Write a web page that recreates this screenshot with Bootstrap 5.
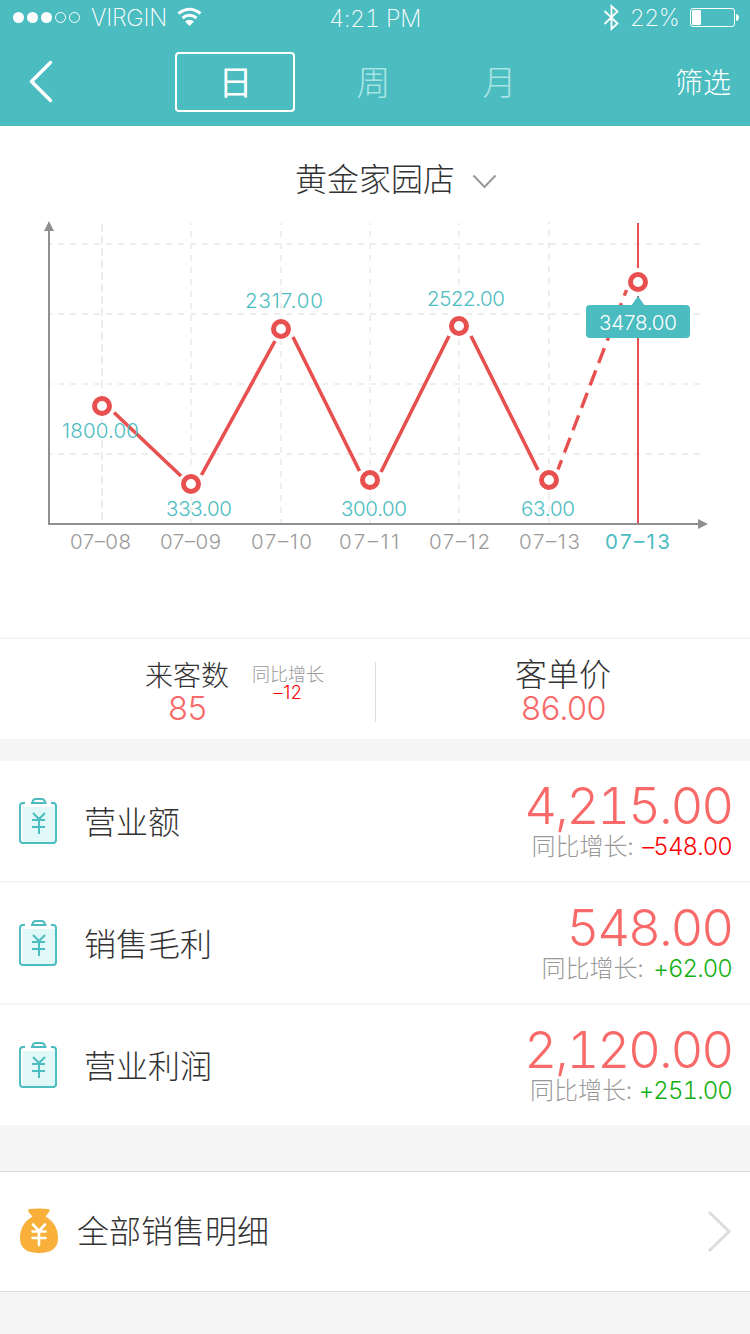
<!DOCTYPE html>
<html lang="zh-CN">
<head>
<meta charset="utf-8">
<meta name="viewport" content="width=device-width, initial-scale=1">
<title>黄金家园店</title>
<link href="https://cdn.jsdelivr.net/npm/bootstrap@5.3.0/dist/css/bootstrap.min.css" rel="stylesheet">
<style>
:root { --teal:#4bbcbf; --coral:#f86a69; --line:#f5f5f5; }
body { background:#f5f5f5; color:#333; font-family:Inter,"Noto Sans CJK SC",sans-serif; font-weight:300; width:750px; height:1334px; overflow:hidden; }
svg { display:block; flex:none; }
.cjk { font-family:"Noto Sans CJK SC",sans-serif; }
.num { font-variant-numeric:tabular-nums; white-space:nowrap; }
.app-head { background:var(--teal); height:126px; }
.status { height:36px; font-size:23.5px; line-height:38px; font-weight:200; letter-spacing:-.25px; }
.status-side { width:300px; }
.toolbar { height:90px; padding:0 19px 0 27px; }
.seg { width:120px; height:60px; font-size:34px; line-height:53px; border:2px solid transparent; border-radius:4px; text-align:center; color:#a9e4e4; padding:0 0 0 1px; text-decoration:none; }
.seg.active { border-color:#fff; color:#fff; font-weight:400; }
.filter { font-size:28px; line-height:38px; width:56px; }
.trend { height:513px; border-bottom:2px solid var(--line); }
.store { height:84px; padding:30px 0 0 44px; font-size:32px; line-height:42px; }
.stats { height:100px; }
.stat-title { line-height:34px; height:32px; margin-top:-1px; }
.coral { color:var(--coral); }
.gray { color:#999; }
.stat-num { font-size:32.5px; line-height:39px; letter-spacing:-1.6px; }
.rule { width:1px; height:60px; background:#ddd; margin-top:23px; }
.metric { height:122px; border-bottom:2px solid var(--line); padding:0 18px; }
.metric:last-child { height:120px; border:0; }
.metric-name { font-size:32px; line-height:42px; margin:-3px 0 0 26px; }
.big { font-size:51px; line-height:54px; letter-spacing:-2.2px; }
.cmp { font-size:24px; line-height:28px; margin-top:-2px; margin-bottom:2px; }
.cmp .num { letter-spacing:-.9px; }
.down { color:#f00; } .up { color:#13b013; }
.detail { height:121px; border-top:1px solid #ddd; border-bottom:1px solid #ddd; margin-top:46px; padding:0 19px 2px; }
.detail-name { font-size:32px; line-height:42px; margin:-3px 0 0 19px; }
</style>
</head>
<body>
<header class="app-head text-white">
  <div class="status d-flex justify-content-between">
    <div class="status-side d-flex align-items-center">
      <svg width="91" height="36" fill="#fff"><circle cx="18.500" cy="17.500" r="5.500"/><circle cx="32.500" cy="17.500" r="5.500"/><circle cx="46.500" cy="17.500" r="5.500"/><g fill="none" stroke="#fff"><circle cx="60.500" cy="17.500" r="5"/><circle cx="74.500" cy="17.500" r="5"/></g></svg>
      <span class="num">VIRGIN</span>
      <svg style="margin-left:9px" width="30" height="36" viewBox="176 0 30 36"><g fill="none" stroke="#fff" stroke-width="3"><path d="M178.500 13.500Q189.500 5 200.500 13.500"/><path d="M182.500 18Q189.500 12.500 196.500 18"/></g><path d="M185 21.500Q189.500 18 194 21.500L189.500 26Z" fill="#fff"/></svg>
    </div>
    <span class="num">4:21 PM</span>
    <div class="status-side d-flex align-items-center justify-content-end">
      <svg width="20" height="36" viewBox="602 0 20 36"><path d="M604.500 11L617.500 23.500L611.500 29V6L617.500 11.500L604.500 24" fill="none" stroke="#fff" stroke-width="1.800"/></svg>
      <span class="num mx-2" style="letter-spacing:-.7px">22%</span>
      <svg style="margin-left:3px" width="60" height="36" viewBox="690 0 60 36"><rect x="690.500" y="8.500" width="44" height="18" rx="2.500" fill="none" stroke="#fff"/><rect x="692" y="10" width="9" height="15" rx="1" fill="#fff"/><path d="M736 14Q739 14.500 739 17.500T736 21Z" fill="#fff"/></svg>
    </div>
  </div>
  <div class="toolbar d-flex align-items-center cjk">
    <svg width="28" height="44" viewBox="27 59 28 44"><path d="M50.500 62.500L31.500 81.500L50.500 100.500" fill="none" stroke="#fff" stroke-width="3.500" stroke-linecap="round" stroke-linejoin="round"/></svg>
    <nav class="d-flex" style="margin:2px 0 0 120px">
      <a class="seg active">日</a><a class="seg" style="margin-left:18px">周</a><a class="seg" style="margin-left:6px">月</a>
    </nav>
    <span class="filter ms-auto">筛选</span>
  </div>
</header>
<main>
  <section class="trend bg-white">
    <div class="store d-flex justify-content-center cjk"><span>黄金家园店</span>
      <svg class="ms-3" width="28" height="44" viewBox="471 156 28 44"><path d="M473.500 175.500L484.500 187L495.500 175.500" fill="none" stroke="#999" stroke-width="2"/></svg></div>
    <svg width="750" height="360" viewBox="0 210 750 360">
      <g stroke="#eee" stroke-width="2" stroke-dasharray="6 6" stroke-dashoffset="4">
        <path d="M50 244H700M50 314H700M50 384H700M50 454H700"/>
        <path d="M102 224V523" stroke-dasharray="8 4" stroke-dashoffset="0"/>
        <path d="M191 223V523M281 223V523M370 223V523M459 223V523M549 222V523"/>
      </g>
      <path d="M49 228V524H700" fill="none" stroke="#8f8f8f" stroke-width="2"/>
      <path d="M49 221L54 231H44ZM708 524L698 519V529Z" fill="#8f8f8f"/>
      <path d="M638 223V268M638 296V523" stroke="#e8504f" stroke-width="2"/>
      <g fill="#fff"><circle cx="102" cy="406" r="13"/><circle cx="191" cy="484" r="13"/><circle cx="281" cy="329" r="13"/><circle cx="370" cy="480" r="13"/><circle cx="459" cy="326" r="13"/><circle cx="549" cy="480" r="13"/><circle cx="638" cy="282" r="13"/></g>
      <g stroke="#e8504f" stroke-width="3.600" fill="none">
        <path d="M114 412.500L181 476M201.500 475L275 341M293 337L359.500 471M381 472L449 336M471 336L538 470"/>
        <path d="M558 469.500L626.500 290" stroke-width="3.400" stroke-dasharray="16 8" stroke-dashoffset="6"/>
      </g>
      <g fill="#fff" stroke="#e8504f" stroke-width="5"><circle cx="102" cy="406" r="7.500"/><circle cx="191" cy="484" r="7.500"/><circle cx="281" cy="329" r="7.500"/><circle cx="370" cy="480" r="7.500"/><circle cx="459" cy="326" r="7.500"/><circle cx="549" cy="480" r="7.500"/><circle cx="638" cy="282" r="7.500"/></g>
      <path d="M631 306L638 296L645 306Z" fill="#4bbcbf"/><rect x="586" y="305" width="104" height="33" rx="4" fill="#4bbcbf"/>
      <g font-size="20.500" fill="#4bbcbf" font-weight="260">
        <text x="62" y="438" textLength="77">1800.00</text><text x="166" y="516" textLength="66">333.00</text><text x="245" y="308" textLength="78">2317.00</text><text x="341" y="516" textLength="66">300.00</text><text x="427" y="306" textLength="78">2522.00</text><text x="521" y="516" textLength="54">63.00</text>
        <text x="599" y="330" textLength="78" fill="#fff">3478.00</text>
      </g>
      <g font-size="20.500" fill="#999" font-weight="260">
        <text x="70" y="549" textLength="61">07–08</text><text x="160" y="549" textLength="61">07–09</text><text x="251" y="549" textLength="61">07–10</text><text x="339" y="549" textLength="60">07–11</text><text x="429" y="549" textLength="61">07–12</text><text x="519" y="549" textLength="61">07–13</text><text x="605" y="549" textLength="65" fill="#4bbcbf" font-weight="400">07–13</text>
      </g>
    </svg>
  </section>
  <section class="stats bg-white d-flex">
    <div class="d-flex" style="width:375px;padding:19px 0 0 145px">
      <div class="text-center"><div class="stat-title cjk" style="font-size:28px">来客数</div><div class="stat-num num coral">85</div></div>
      <div class="text-center cjk" style="font-size:18px;line-height:19px;margin:6px 0 0 23px"><div class="gray">同比增长</div><div class="down" style="font-family:Inter,sans-serif;letter-spacing:.6px">–12</div></div>
    </div>
    <div class="rule"></div>
    <div class="flex-fill text-center" style="padding-top:19px"><div class="stat-title cjk" style="font-size:32px;line-height:31px">客单价</div><div class="stat-num num coral">86.00</div></div>
  </section>
  <section class="bg-white" style="margin-top:22px">
    <div class="metric d-flex align-items-center">
      <svg width="40" height="48" viewBox="0 0 40 48"><use href="#bill"/></svg>
      <span class="metric-name cjk">营业额</span>
      <div class="ms-auto text-end"><div class="big num coral">4,215.00</div><div class="cmp"><span class="cjk gray" style="margin-right:2px">同比增长:</span> <span class="num down">–548.00</span></div></div>
    </div>
    <div class="metric d-flex align-items-center">
      <svg width="40" height="48" viewBox="0 0 40 48"><use href="#bill"/></svg>
      <span class="metric-name cjk">销售毛利</span>
      <div class="ms-auto text-end"><div class="big num coral">548.00</div><div class="cmp"><span class="cjk gray" style="margin-right:3px">同比增长:</span> <span class="num up">+62.00</span></div></div>
    </div>
    <div class="metric d-flex align-items-center">
      <svg width="40" height="48" viewBox="0 0 40 48"><use href="#bill"/></svg>
      <span class="metric-name cjk">营业利润</span>
      <div class="ms-auto text-end"><div class="big num coral">2,120.00</div><div class="cmp"><span class="cjk gray">同比增长:</span> <span class="num up">+251.00</span></div></div>
    </div>
  </section>
  <section class="detail bg-white d-flex align-items-center">
    <svg width="39" height="46" viewBox="19 1208 39 46"><path d="M29 1209Q39 1208 48.500 1209Q50.500 1210 49 1212L45.500 1216.500Q58 1224 58 1238Q58 1253 39 1253T20 1238Q20 1224 32.500 1216.500L28.500 1212Q27.500 1210 29 1209Z" fill="#f9b03a"/><path d="M33 1224.500L39 1231L45 1224.500M32.500 1231.500H45.500M32.500 1238H45.500M39 1231V1245" fill="none" stroke="#fff" stroke-width="2.600" stroke-linecap="round"/></svg>
    <span class="detail-name cjk">全部销售明细</span>
    <svg class="ms-auto" width="24" height="42" viewBox="707 1210 24 42"><path d="M709 1212L729 1231.500L709 1251" fill="none" stroke="#ddd" stroke-width="3"/></svg>
  </section>
</main>
<svg width="0" height="0" class="d-none"><defs>
  <symbol id="bill" viewBox="0 0 40 48"><rect x="5" y="10" width="32" height="35" fill="#e0f8f8"/><g fill="none" stroke="#4bbcbf" stroke-width="2"><path d="M7 6H5Q2 6 2 9V43Q2 46 5 46H35Q38 46 38 43V9Q38 6 35 6H33"/><path d="M13 6H28.500M14.500 6Q14.500 2 18 2H23Q27 2 27 6"/><path d="M15 16L21 22L27 16M14 23H27M14 30H27M21 22V37"/></g></symbol>
</defs></svg>
<script src="https://cdn.jsdelivr.net/npm/bootstrap@5.3.0/dist/js/bootstrap.bundle.min.js"></script>
</body>
</html>
